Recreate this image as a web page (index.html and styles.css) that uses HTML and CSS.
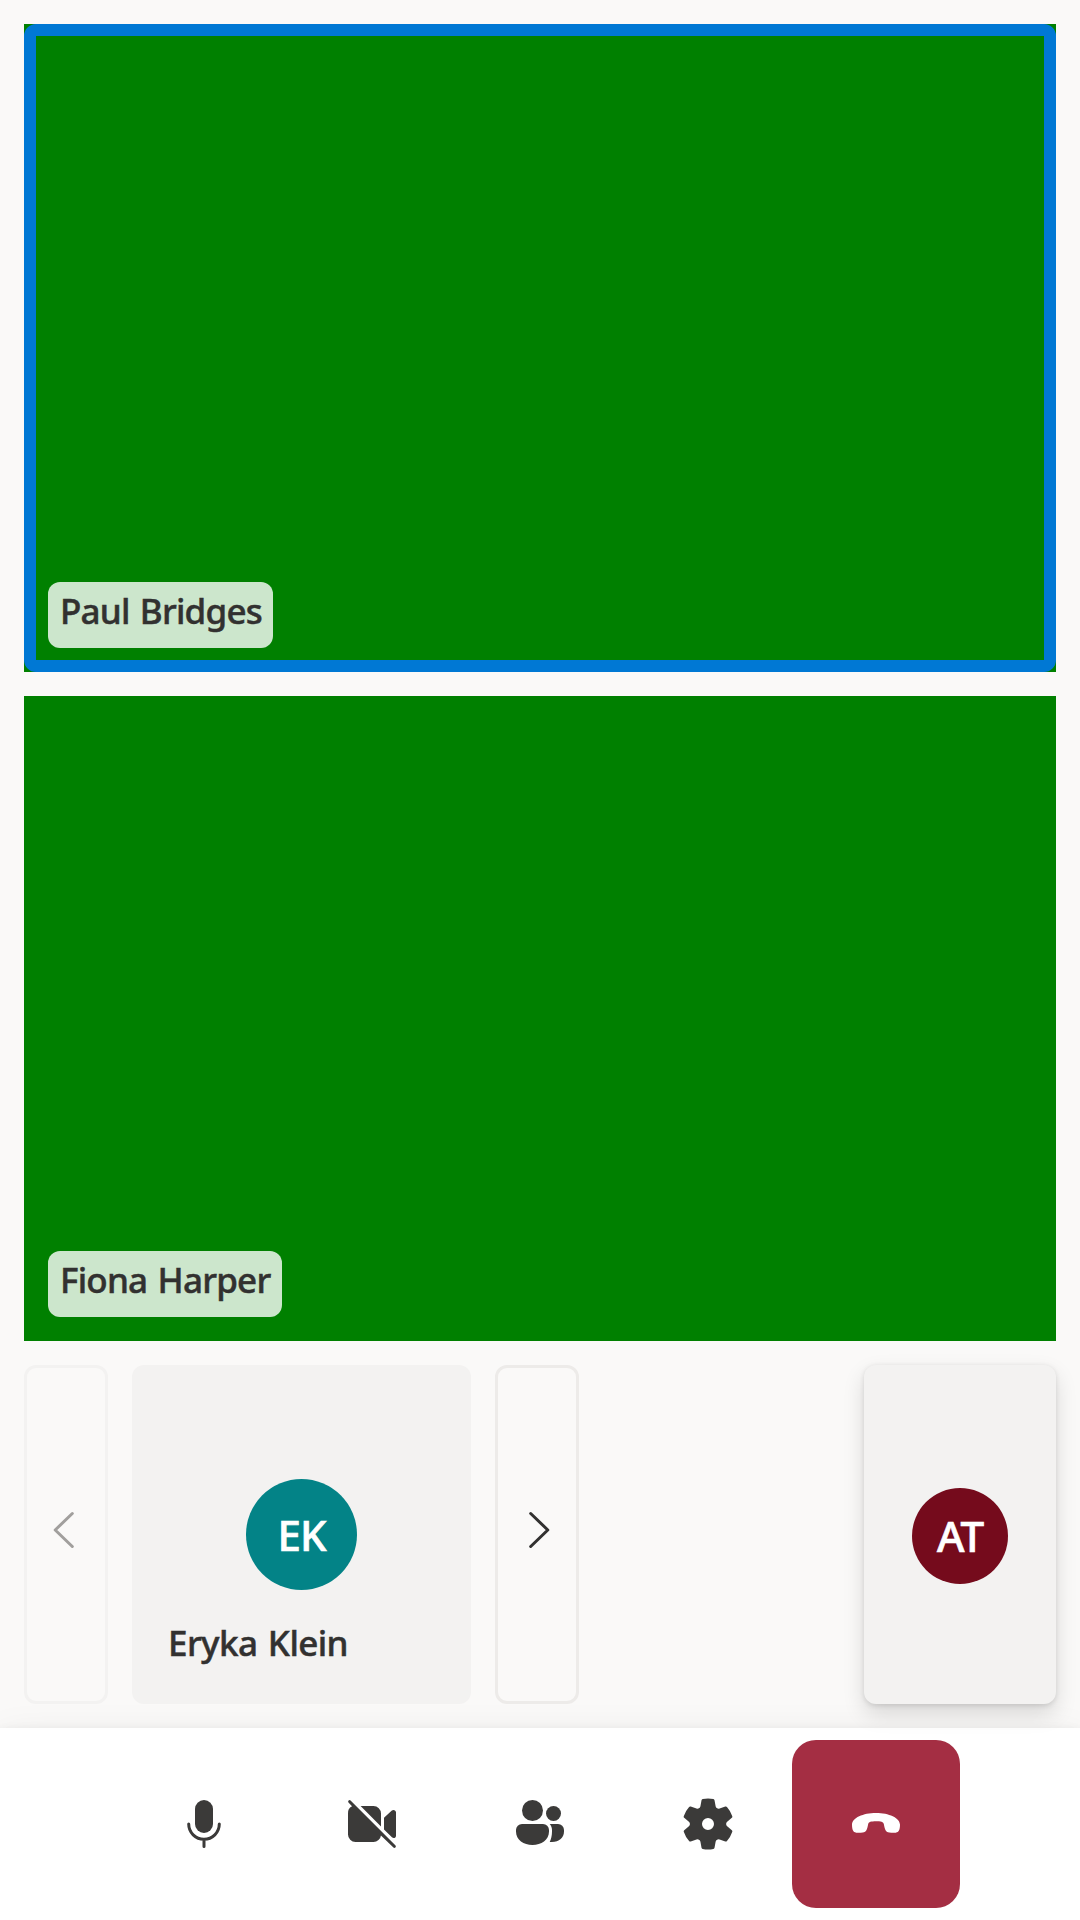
FILE: index.html
```
<!DOCTYPE html>
<html lang="en">
<head>
<meta charset="utf-8">
<title>Call</title>
<link rel="stylesheet" href="styles.css">
</head>
<body>
<div class="call">
  <main class="stage">
    <section class="video video-first speaking"><span class="name name-paul">Paul Bridges</span></section>
    <section class="video"><span class="name name-fiona">Fiona Harper</span></section>
    <div class="strip">
      <button class="pager pager-prev" disabled aria-label="Previous">
        <svg class="icon" viewBox="0 0 20 20"><path d="M12.1 4.5 6.4 10l5.700 5.500"/></svg>
      </button>
      <section class="tile">
        <div class="avatar avatar-teal"><span class="initials">EK</span></div>
        <span class="tile-name">Eryka Klein</span>
      </section>
      <button class="pager pager-next" aria-label="Next">
        <svg class="icon" viewBox="0 0 20 20"><path d="M7.9 4.5 13.6 10l-5.700 5.500"/></svg>
      </button>
      <section class="local"><div class="avatar avatar-red"><span class="initials">AT</span></div></section>
    </div>
  </main>
  <nav class="controls">
    <button class="control" aria-label="Microphone">
      <svg class="icon" viewBox="0 0 20 20"><rect x="7" y="2" width="6" height="11" rx="3"/><path class="line" d="M4.900 10a5.100 5.100 0 0 0 10.200 0M10 15.200v2.300"/></svg>
    </button>
    <button class="control" aria-label="Camera">
      <svg class="icon" viewBox="0 0 20 20"><path d="M2.850 2.150a.5.5 0 0 0-.7.7l1.200 1.200A2.500 2.500 0 0 0 2 6.500v7A2.500 2.500 0 0 0 4.500 16h6a2.500 2.500 0 0 0 2.480-2.200l4.170 4.050a.5.5 0 0 0 .7-.7l-15-15ZM13 6.500v4.300L6.200 4h4.300A2.500 2.500 0 0 1 13 6.500ZM14 11.800l2.650 2.650c.6.5 1.350.1 1.350-.55V6.100c0-.7-.85-1.050-1.380-.6L14 7.900v3.900Z"/></svg>
    </button>
    <button class="control" aria-label="People">
      <svg class="icon" viewBox="0 0 20 20"><circle cx="7.500" cy="5.500" r="3.500"/><circle cx="14.500" cy="6.500" r="2.500"/><path d="M4 10a2 2 0 0 0-2 2v.500C2 15.400 4.600 17 7.500 17s5.500-1.600 5.500-4.500V12a2 2 0 0 0-2-2H4ZM13.250 10c.45.5.75 1.200.75 2v.500c0 1.400-.3 2.500-.75 3.480.2.020.5.020.75.020 2.400 0 4-1.400 4-3.500V12a2 2 0 0 0-2-2h-2.750Z"/></svg>
    </button>
    <button class="control" aria-label="Settings">
      <svg class="icon" viewBox="0 0 20 20"><path d="M1.910 7.380A8.500 8.500 0 0 1 3.700 4.300a.5.5 0 0 1 .54-.13l1.920.68a1 1 0 0 0 1.320-.76l.36-2a.5.5 0 0 1 .4-.4 8.530 8.530 0 0 1 3.550 0c.2.040.35.2.38.4l.37 2a1 1 0 0 0 1.320.76l1.920-.68a.5.5 0 0 1 .54.13 8.500 8.500 0 0 1 1.780 3.080c.060.2 0 .4-.15.54l-1.560 1.320a1 1 0 0 0 0 1.520l1.560 1.320a.5.5 0 0 1 .15.54 8.500 8.500 0 0 1-1.780 3.080.5.5 0 0 1-.54.13l-1.920-.68a1 1 0 0 0-1.320.76l-.37 2a.5.5 0 0 1-.38.4 8.530 8.530 0 0 1-3.560 0 .5.5 0 0 1-.39-.4l-.36-2a1 1 0 0 0-1.320-.76l-1.920.68a.5.5 0 0 1-.54-.13 8.500 8.500 0 0 1-1.780-3.080.5.5 0 0 1 .15-.54l1.560-1.320a1 1 0 0 0 0-1.520L2.060 7.920a.5.5 0 0 1-.15-.54ZM8 10a2 2 0 1 0 4 0 2 2 0 0 0-4 0Z"/></svg>
    </button>
    <button class="control control-end" aria-label="Leave">
      <svg class="icon" viewBox="0 0 20 20"><path d="M2 10.200c0-2.300 3.700-3.900 8-3.900s8 1.600 8 3.900c0 1.700-.35 2.600-1.400 2.680-.8.060-1.550.020-2.150-.05-1.350-.15-1.500-1.150-1.830-2.750C12.500 9.300 11.600 9.100 10 9.100s-2.500.2-2.620.98c-.33 1.600-.48 2.600-1.830 2.750-.6.070-1.350.11-2.150.05C2.350 12.800 2 11.900 2 10.200Z"/></svg>
    </button>
  </nav>
</div>
</body>
</html>
```
FILE: styles.css
```
* { box-sizing: border-box; }
body { margin: 0; font-family: "Noto Sans", "Open Sans", sans-serif; font-weight: 500; color: #323130; }
button { margin: 0; padding: 0; border: 0; background: none; font: inherit; color: inherit; }
.call { display: flex; flex-direction: column; width: 1080px; height: 1920px; background: #faf9f8; overflow: hidden; }
.stage { flex: 1; display: flex; flex-direction: column; gap: 24px; padding: 24px; }
.video { position: relative; display: flex; align-items: flex-end; height: 645px; padding: 24px; background: #008000; }
.video-first { height: 648px; }
.speaking::after { content: ""; position: absolute; inset: 0; border: 12px solid #0078d4; border-radius: 12px; }
.name, .tile-name { font-size: 35px; line-height: 58px; letter-spacing: -.8px; word-spacing: 2px; white-space: nowrap; -webkit-text-stroke: .5px currentColor; }
.name { height: 66px; padding: 0 12px; border-radius: 12px; background: rgba(255, 255, 255, .8); }
.name-paul { width: 225px; }
.name-fiona { width: 234px; }
.tile-name { letter-spacing: -.6px; }
.strip { display: flex; gap: 24px; height: 339px; }
.pager { display: flex; align-items: center; justify-content: center; width: 84px; border: 3px solid #edebe9; border-radius: 12px; padding-bottom: 9px; }
.pager-prev { border-color: #f3f2f1; color: #a19f9d; }
.pager .icon { fill: none; stroke: currentColor; stroke-width: 1; stroke-linecap: round; stroke-linejoin: round; }
.tile { position: relative; display: flex; align-items: center; justify-content: center; width: 339px; border-radius: 12px; background: #f3f2f1; }
.tile-name { position: absolute; left: 36px; bottom: 32px; }
.avatar { display: flex; align-items: center; justify-content: center; border-radius: 50%; color: #fff; font-size: 42px; line-height: 60px; letter-spacing: -1px; -webkit-text-stroke: .7px currentColor; }
.avatar-teal { width: 111px; height: 111px; background: #038387; }
.avatar-red { width: 96px; height: 96px; margin-top: 3px; background: #750b1c; }
.local { position: relative; z-index: 2; display: flex; align-items: center; justify-content: center; width: 192px; margin-left: auto; border-radius: 12px; background: #f3f2f1; box-shadow: 0 9.6px 21.6px rgba(0, 0, 0, .132), 0 1.8px 5.4px rgba(0, 0, 0, .108); }
.controls { display: flex; justify-content: center; align-items: center; height: 192px; background: #fff; box-shadow: 0 19.2px 43.2px rgba(0, 0, 0, .132), 0 3.6px 10.8px rgba(0, 0, 0, .108); }
.control { display: flex; align-items: center; justify-content: center; width: 168px; height: 168px; border-radius: 24px; color: #3b3a39; }
.control-end { background: #a42e43; color: #fff; }
.icon { width: 60px; height: 60px; fill: currentColor; }
.line { fill: none; stroke: currentColor; stroke-width: 1; stroke-linecap: round; }
```
